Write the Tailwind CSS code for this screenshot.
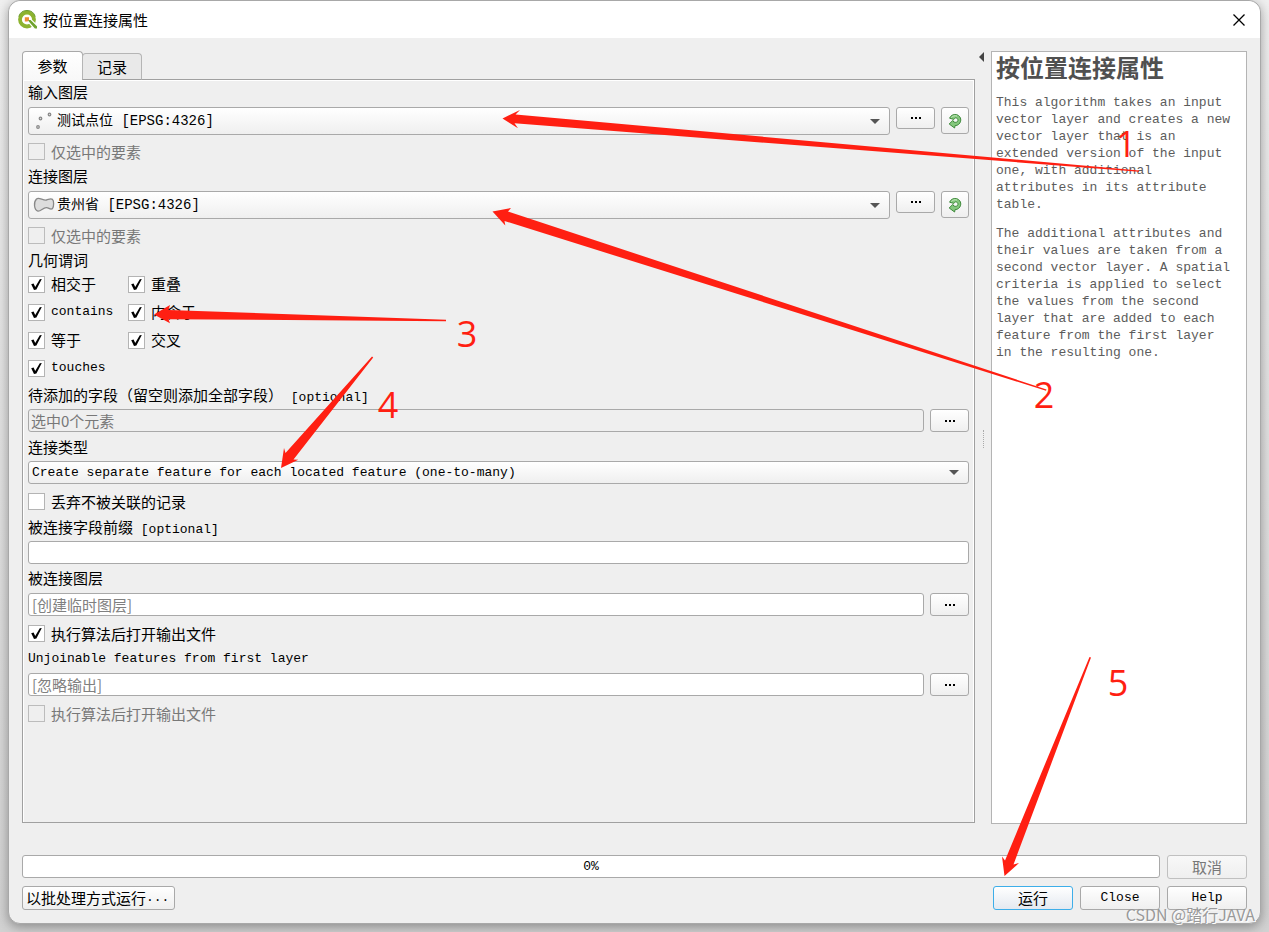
<!DOCTYPE html>
<html lang="zh-CN">
<head>
<meta charset="utf-8">
<title>按位置连接属性</title>
<script src="https://cdn.jsdelivr.net/npm/@tailwindcss/browser@4"></script>
</head>
<body class="relative flex min-h-screen flex-col overflow-hidden bg-linear-to-b from-[#f0f0f0] to-[#d2d2d2] px-2 pb-2 font-['Noto_Sans_CJK_SC',sans-serif] text-[15px] leading-5 text-black">

<svg class="hidden" aria-hidden="true">
  <symbol id="tick" viewBox="0 0 17 17"><path d="M3.200 8.200 5.600 7.400 7.200 11 11.800 3.200 13.800 3 8.400 13.600 6 14z" fill="#000"/></symbol>
  <symbol id="arrow" viewBox="0 0 10 5"><path d="M0 0h10L5 5z" fill="#555"/></symbol>
  <symbol id="dots" viewBox="0 0 10 2"><path d="M0 0h2v2H0zM4 0h2v2H4zM8 0h2v2H8z" fill="#000"/></symbol>
  <symbol id="iterate" viewBox="0 0 14 16">
    <path d="M1.600 5.200C2.600 2.400 5.500 1 8.300 1.600c3.200.7 5 3.600 4.300 6.600-.6 2.600-2.800 4.400-5.600 4.500L6.600 15 1.200 11 4.800 7.400l1 1.600c1.800.8 3.800.2 4.100-1.400.3-1.500-.7-2.600-2.100-2.700-.9 0-1.500.6-1.900 1.500z" fill="#84c77c" stroke="#3f8a3c" stroke-width="1"/>
    <path d="M3.300 4.600C4.600 2.900 7 2.300 9 3.100" fill="none" stroke="#c4e8bd" stroke-width="1"/>
  </symbol>
</svg>

<div class="flex flex-1 flex-col rounded-xl border border-[#a8a8a8] bg-[#efefef] shadow-[0_3px_12px_rgba(0,0,0,0.35)]">
  <header class="flex h-[37px] items-center gap-1 rounded-t-xl bg-white pl-2 pr-[11px]">
    <svg class="size-[22px]" viewBox="0 0 22 22" aria-hidden="true">
      <circle cx="10" cy="10.500" r="7" fill="none" stroke="#8db32f" stroke-width="3.800"/>
      <path d="M1.800 7.500a8.600 8.600 0 0 1 16.400 0" fill="none" stroke="#6a9c30" stroke-width="1"/>
      <path d="M10.500 12v-1.500h3.500l6.600 6.500v3h-3.200z" fill="#6fa32e" stroke="#fff" stroke-width="1.200"/>
      <path d="M7.800 8.300h4.200v2.200l-1.500 2H7.800z" fill="#ee8b35"/>
    </svg>
    <h1 class="flex-1 text-[15px]">按位置连接属性</h1>
    <button type="button" aria-label="关闭" class="flex size-5 items-center justify-center"><svg class="size-3" viewBox="0 0 12 12"><path d="M.5.5l11 11M11.500.5l-11 11" stroke="#000" stroke-width="1.300"/></svg></button>
  </header>

  <main class="flex flex-1 flex-col px-[13px] py-[13px]">
    <div class="flex flex-1">
      <div class="flex min-w-0 flex-1 flex-col pb-px">
        <div class="z-10 -mb-px flex items-end" role="tablist">
          <button type="button" role="tab" aria-selected="true" class="h-[29px] w-[61px] rounded-t-sm border border-b-0 border-[#a9a9a9] bg-linear-to-b from-white to-[#f8f8f8]">参数</button>
          <button type="button" role="tab" aria-selected="false" class="-ml-px h-[27px] w-[60px] rounded-t-sm border border-[#b5b5b5] border-b-[#a0a0a0] bg-[#e9e9e9]">记录</button>
        </div>
        <form class="flex flex-1 flex-col border border-[#a0a0a0] px-[5px] pt-0.5 shadow-[inset_1px_1px_#fff,inset_-1px_0_#fff]">
          <label for="in" class="h-5">输入图层</label>
          <div class="mt-[5px] flex items-start gap-1.5">
            <div class="grid flex-1 items-center">
              <select id="in" class="col-start-1 row-start-1 h-7 w-full appearance-none rounded-[3px] border border-[#a9a9a9] bg-linear-to-b from-white to-[#efefef] pl-7 font-['Liberation_Mono','Noto_Sans_CJK_SC',monospace] text-[14px]"><option>测试点位 [EPSG:4326]</option></select>
              <svg class="pointer-events-none col-start-1 row-start-1 ml-1.5 h-[18px] w-5" viewBox="0 0 20 18" fill="#ddd" stroke="#888" stroke-width="1.200"><circle cx="6.500" cy="6.500" r="1.300"/><circle cx="15.500" cy="2.500" r="1.300"/><circle cx="4" cy="15" r="1.300"/></svg>
              <svg class="pointer-events-none col-start-1 row-start-1 mr-[10px] h-[5px] w-[10px] justify-self-end"><use href="#arrow"/></svg>
            </div>
            <button type="button" aria-label="浏览" class="flex h-[22px] w-[39px] items-center justify-center rounded-[3px] border border-[#a9a9a9] bg-linear-to-b from-white to-[#efefef]"><svg class="h-0.5 w-[10px]"><use href="#dots"/></svg></button>
            <button type="button" aria-label="迭代" class="flex h-[27px] w-7 items-center justify-center rounded-[3px] border border-[#a9a9a9] bg-linear-to-b from-white to-[#efefef]"><svg class="h-4 w-3.5"><use href="#iterate"/></svg></button>
          </div>
          <label class="mt-[7px] mb-px flex h-[19px] items-center gap-1.5 text-[#787878]"><input type="checkbox" disabled class="size-[17px] appearance-none border border-[#bcbcbc] bg-[#efefef]">仅选中的要素</label>

          <label for="join" class="mt-1 h-5">连接图层</label>
          <div class="mt-[5px] flex items-start gap-1.5">
            <div class="grid flex-1 items-center">
              <select id="join" class="col-start-1 row-start-1 h-7 w-full appearance-none rounded-[3px] border border-[#a9a9a9] bg-linear-to-b from-white to-[#efefef] pl-7 font-['Liberation_Mono','Noto_Sans_CJK_SC',monospace] text-[14px]"><option>贵州省 [EPSG:4326]</option></select>
              <svg class="pointer-events-none col-start-1 row-start-1 ml-[5px] h-4 w-[22px]" viewBox="0 0 22 16"><path d="M3.500 2C6-.2 10 3.800 13.500 3c2.500-.6 4-1.800 6-.6 1.600 1.200 1.400 7.600 0 9.200-2.300 1.400-3.500-.8-6-1-3.500-.2-5.500 3.800-8.500 3.500C.8 13 .5 5 3.500 2z" fill="#ddd" stroke="#888" stroke-width="1.300"/></svg>
              <svg class="pointer-events-none col-start-1 row-start-1 mr-[10px] h-[5px] w-[10px] justify-self-end"><use href="#arrow"/></svg>
            </div>
            <button type="button" aria-label="浏览" class="flex h-[22px] w-[39px] items-center justify-center rounded-[3px] border border-[#a9a9a9] bg-linear-to-b from-white to-[#efefef]"><svg class="h-0.5 w-[10px]"><use href="#dots"/></svg></button>
            <button type="button" aria-label="迭代" class="flex h-[27px] w-7 items-center justify-center rounded-[3px] border border-[#a9a9a9] bg-linear-to-b from-white to-[#efefef]"><svg class="h-4 w-3.5"><use href="#iterate"/></svg></button>
          </div>
          <label class="mt-[7px] mb-px flex h-[19px] items-center gap-1.5 text-[#787878]"><input type="checkbox" disabled class="size-[17px] appearance-none border border-[#bcbcbc] bg-[#efefef]">仅选中的要素</label>

          <fieldset class="mt-1">
            <legend class="h-5">几何谓词</legend>
            <div class="grid auto-rows-[28px] grid-cols-[100px_100px] items-center">
              <label class="flex items-center gap-1.5"><span class="grid"><input type="checkbox" checked class="peer col-start-1 row-start-1 size-[17px] appearance-none border border-[#b4b4b4] bg-white"><svg class="pointer-events-none invisible col-start-1 row-start-1 size-[17px] peer-checked:visible"><use href="#tick"/></svg></span>相交于</label>
              <label class="flex items-center gap-1.5"><span class="grid"><input type="checkbox" checked class="peer col-start-1 row-start-1 size-[17px] appearance-none border border-[#b4b4b4] bg-white"><svg class="pointer-events-none invisible col-start-1 row-start-1 size-[17px] peer-checked:visible"><use href="#tick"/></svg></span>重叠</label>
              <label class="flex items-center gap-1.5 font-['Liberation_Mono',monospace] text-[13px]"><span class="grid"><input type="checkbox" checked class="peer col-start-1 row-start-1 size-[17px] appearance-none border border-[#b4b4b4] bg-white"><svg class="pointer-events-none invisible col-start-1 row-start-1 size-[17px] peer-checked:visible"><use href="#tick"/></svg></span>contains</label>
              <label class="flex items-center gap-1.5"><span class="grid"><input type="checkbox" checked class="peer col-start-1 row-start-1 size-[17px] appearance-none border border-[#b4b4b4] bg-white"><svg class="pointer-events-none invisible col-start-1 row-start-1 size-[17px] peer-checked:visible"><use href="#tick"/></svg></span>内含于</label>
              <label class="flex items-center gap-1.5"><span class="grid"><input type="checkbox" checked class="peer col-start-1 row-start-1 size-[17px] appearance-none border border-[#b4b4b4] bg-white"><svg class="pointer-events-none invisible col-start-1 row-start-1 size-[17px] peer-checked:visible"><use href="#tick"/></svg></span>等于</label>
              <label class="flex items-center gap-1.5"><span class="grid"><input type="checkbox" checked class="peer col-start-1 row-start-1 size-[17px] appearance-none border border-[#b4b4b4] bg-white"><svg class="pointer-events-none invisible col-start-1 row-start-1 size-[17px] peer-checked:visible"><use href="#tick"/></svg></span>交叉</label>
              <label class="flex items-center gap-1.5 font-['Liberation_Mono',monospace] text-[13px]"><span class="grid"><input type="checkbox" checked class="peer col-start-1 row-start-1 size-[17px] appearance-none border border-[#b4b4b4] bg-white"><svg class="pointer-events-none invisible col-start-1 row-start-1 size-[17px] peer-checked:visible"><use href="#tick"/></svg></span>touches</label>
            </div>
          </fieldset>

          <label for="fields" class="mt-[3px] h-5">待添加的字段（留空则添加全部字段）<span class="font-['Liberation_Mono',monospace] text-[13px]"> [optional]</span></label>
          <div class="mt-1 flex gap-1.5">
            <input id="fields" readonly value="选中0个元素" class="h-[23px] min-w-0 flex-1 rounded-[3px] border border-[#a9a9a9] bg-[#efefef] px-0.5 text-[#787878]">
            <button type="button" aria-label="选择字段" class="flex h-[23px] w-[39px] items-center justify-center rounded-[3px] border border-[#a9a9a9] bg-linear-to-b from-white to-[#efefef]"><svg class="h-0.5 w-[10px]"><use href="#dots"/></svg></button>
          </div>

          <label for="type" class="mt-[5px] h-5">连接类型</label>
          <div class="mt-1 grid items-center">
            <select id="type" class="col-start-1 row-start-1 h-[23px] w-full appearance-none rounded-[3px] border border-[#a9a9a9] bg-linear-to-b from-white to-[#efefef] pl-[3px] font-['Liberation_Mono',monospace] text-[13px]"><option>Create separate feature for each located feature (one-to-many)</option></select>
            <svg class="pointer-events-none col-start-1 row-start-1 mr-[10px] h-[5px] w-[10px] justify-self-end"><use href="#arrow"/></svg>
          </div>
          <label class="mt-2 mb-px flex h-[19px] items-center gap-1.5"><input type="checkbox" class="size-[17px] appearance-none border border-[#b4b4b4] bg-white">丢弃不被关联的记录</label>

          <label for="prefix" class="mt-[5px] h-5">被连接字段前缀<span class="font-['Liberation_Mono',monospace] text-[13px]"> [optional]</span></label>
          <input id="prefix" class="mt-1 h-[23px] rounded-[3px] border border-[#a9a9a9] bg-white px-0.5">

          <label for="joined" class="mt-1 h-5">被连接图层</label>
          <div class="mt-[5px] flex gap-1.5">
            <input id="joined" placeholder="[创建临时图层]" class="h-[23px] min-w-0 flex-1 rounded-[3px] border border-[#a9a9a9] bg-white px-[3px] placeholder:text-[#808080]">
            <button type="button" aria-label="选择输出" class="flex h-[23px] w-[39px] items-center justify-center rounded-[3px] border border-[#a9a9a9] bg-linear-to-b from-white to-[#efefef]"><svg class="h-0.5 w-[10px]"><use href="#dots"/></svg></button>
          </div>
          <label class="mt-2 mb-px flex h-[19px] items-center gap-1.5"><span class="grid"><input type="checkbox" checked class="peer col-start-1 row-start-1 size-[17px] appearance-none border border-[#b4b4b4] bg-white"><svg class="pointer-events-none invisible col-start-1 row-start-1 size-[17px] peer-checked:visible"><use href="#tick"/></svg></span>执行算法后打开输出文件</label>

          <label for="unjoin" class="mt-[5px] h-5 font-['Liberation_Mono',monospace] text-[13px]">Unjoinable features from first layer</label>
          <div class="mt-1 flex gap-1.5">
            <input id="unjoin" placeholder="[忽略输出]" class="h-[23px] min-w-0 flex-1 rounded-[3px] border border-[#a9a9a9] bg-white px-[3px] placeholder:text-[#808080]">
            <button type="button" aria-label="选择输出" class="flex h-[23px] w-[39px] items-center justify-center rounded-[3px] border border-[#a9a9a9] bg-linear-to-b from-white to-[#efefef]"><svg class="h-0.5 w-[10px]"><use href="#dots"/></svg></button>
          </div>
          <label class="mt-2 flex h-[19px] items-center gap-1.5 text-[#787878]"><input type="checkbox" disabled class="size-[17px] appearance-none border border-[#bcbcbc] bg-[#efefef]">执行算法后打开输出文件</label>
        </form>
      </div>

      <div class="flex w-4 flex-col items-center justify-between">
        <button type="button" aria-label="折叠帮助" class="mt-px mr-1 h-[10px] w-[5px]"><svg class="h-[10px] w-[5px]" viewBox="0 0 5 10"><path d="M5 0v10L0 5z" fill="#444"/></svg></button>
        <span class="h-[18px] border-l border-dotted border-[#aaa]"></span>
        <span class="h-2"></span>
      </div>

      <aside class="w-64 border border-[#b4b4b4] bg-white pr-[10px] pl-1 text-[#5c5c5c]">
        <h2 class="mt-[3px] text-2xl leading-6 font-bold text-[#505050]">按位置连接属性</h2>
        <div class="mt-[15px] flex flex-col gap-3 font-['Liberation_Mono',monospace] text-[13px] leading-[17px]">
          <p>This algorithm takes an input vector layer and creates a new vector layer that is an extended version of the input one, with additional attributes in its attribute table.</p>
          <p>The additional attributes and their values are taken from a second vector layer. A spatial criteria is applied to select the values from the second layer that are added to each feature from the first layer in the resulting one.</p>
        </div>
      </aside>
    </div>

    <div class="mt-[31px] flex items-start gap-[7px]">
      <div role="progressbar" aria-valuenow="0" aria-label="进度" class="flex h-[23px] flex-1 items-center justify-center rounded-[3px] border border-[#a9a9a9] bg-white font-['Liberation_Mono',monospace] text-[13px]">0%</div>
      <button type="button" disabled class="h-6 w-20 rounded-[3px] border border-[#c0c0c0] bg-linear-to-b from-[#f8f8f8] to-[#efefef] text-[#787878]">取消</button>
    </div>
    <div class="mt-[7px] flex gap-[7px]">
      <button type="button" class="mr-auto flex h-6 w-[153px] items-center rounded-[3px] border border-[#a9a9a9] bg-linear-to-b from-white to-[#efefef] pl-[3px] whitespace-nowrap">以批处理方式运行<span class="font-['Liberation_Mono',monospace] text-[13px]">...</span></button>
      <button type="button" class="h-6 w-20 rounded-[3px] border border-[#3daee9] bg-linear-to-b from-white to-[#e4e9f0]">运行</button>
      <button type="button" class="h-6 w-20 rounded-[3px] border border-[#a9a9a9] bg-linear-to-b from-white to-[#efefef] font-['Liberation_Mono',monospace] text-[13px]">Close</button>
      <button type="button" class="h-6 w-20 rounded-[3px] border border-[#a9a9a9] bg-linear-to-b from-white to-[#efefef] font-['Liberation_Mono',monospace] text-[13px]">Help</button>
    </div>
  </main>
</div>

<!-- Numbered step arrows over the dialog -->
<svg class="pointer-events-none absolute top-0 left-0 z-20 h-[932px] w-[1269px]" viewBox="0 0 1269 932" fill="#ff1f12">
  <path d="M502.500 118.500 520 110l-4.500 4.500L1139 170.500v1.200L514.500 123.300l3.500 5z"/>
  <path d="M492.500 211.500 511 208l-3 3.500L1046.500 389.500l-.5 1.200L504.500 221l.8 4.500z"/>
  <path d="M154 314.500 170 305l-1.500 5L446 319.700v1.500L168.500 319.200l1.500 4z"/>
  <path d="M281 468 284 448l1.500 5L372 356.500l1.200 1L293.500 459.500l4.800.3z"/>
  <path d="M1004.500 876 1002 856.500l3 4L1089.500 657l1.500.5L1013.500 864.500l5.500-1.500z"/>
  <g class="font-['Open_Sans',sans-serif] text-4xl" text-anchor="middle">
    <text x="1126" y="157">1</text>
    <text x="1044" y="408">2</text>
    <text x="467" y="347">3</text>
    <text x="388" y="418">4</text>
    <text x="1118" y="696">5</text>
  </g>
</svg>
<div class="pointer-events-none absolute right-[14px] bottom-2 z-30 text-base leading-5 text-[#999] [text-shadow:1px_1px_0_#fff]">CSDN @踏行JAVA</div>
</body>
</html>
